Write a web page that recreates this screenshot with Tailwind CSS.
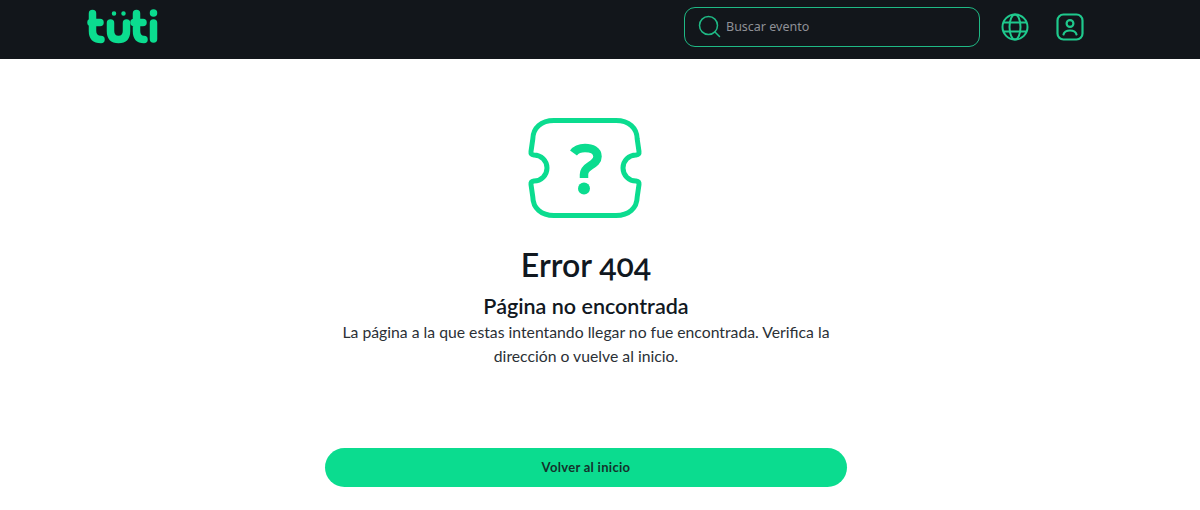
<!DOCTYPE html>
<html lang="es">

<head>
    <meta charset="UTF-8">
    <meta name="viewport" content="width=device-width, initial-scale=1.0">
    <title>Error 404</title>
    <script src="https://cdn.jsdelivr.net/npm/@tailwindcss/browser@4"></script>
</head>

<body class="bg-white font-['Lato',sans-serif] h-[510px] overflow-hidden">
<nav class="bg-[#12161b] h-[59px] flex items-center pl-[87px] pr-[116px]">
    <!-- logo -->
    <svg class="w-[71px] h-[44px] mb-[8px]" viewBox="0 0 71 44" fill="none" stroke="#0bdc8f" stroke-width="7.500" stroke-linecap="round" stroke-linejoin="round">
        <path d="M5.500 9.500V27Q5.500 35.500 14 35.500M4 18.500H13"/>
        <path d="M23.500 19V27Q23.500 35.500 31.500 35.500Q39.500 35.500 39.500 27V19"/>
        <path d="M49.500 9.500V27Q49.500 35.500 57 35.500M47 18.500H56"/>
        <path d="M66.500 19V35"/>
        <circle cx="27" cy="9.500" r="1.500" fill="#0bdc8f" stroke-width="1.500"/>
        <circle cx="36.500" cy="9.500" r="1.500" fill="#0bdc8f" stroke-width="1.500"/>
        <circle cx="66.500" cy="9" r="3" fill="#0bdc8f" stroke-width="1.500"/>
    </svg>

    <div class="ml-auto flex items-center mb-[6px]">
        <div class="w-[296px] h-[40px] border border-[#1fb985] rounded-[11px] flex items-center pl-[13px] gap-[5px]">
            <svg class="w-[23px] h-[23px]" viewBox="0 0 23 23" fill="none" stroke="#1fb985" stroke-width="1.500" stroke-linecap="round">
                <circle cx="10.500" cy="10.500" r="9"/>
                <path d="M17 17L21.500 21.500"/>
            </svg>
            <span class="pt-[1px] font-['Noto_Sans',sans-serif] text-[12.500px] text-[#8f9197]">Buscar evento</span>
        </div>

        <svg class="w-[28px] h-[28px] ml-[21px]" viewBox="0 0 28 28" fill="none" stroke="#1fc98d" stroke-width="2">
            <circle cx="14" cy="14" r="12.500"/>
            <ellipse cx="14" cy="14" rx="5.500" ry="12.500"/>
            <path d="M2.500 9.500H25.500M2.500 18.500H25.500"/>
        </svg>

        <svg class="w-[28px] h-[28px] ml-[27px]" viewBox="0 0 28 28" fill="none" stroke="#1fc98d" stroke-width="2.200" stroke-linecap="round">
            <rect x="1.500" y="1.500" width="25" height="25" rx="6"/>
            <circle cx="14" cy="10.500" r="3.400"/>
            <path d="M7.500 21.500Q8.500 17.500 14 17.500Q19.500 17.500 20.500 21.500"/>
        </svg>
    </div>
</nav>

<main class="w-[1172px] flex flex-col items-center">
    <svg class="w-[116px] h-[100px] mt-[59px] mr-[2px]" viewBox="0 0 116 100" fill="none">
        <path d="M27 2.500H89C102 2.500 110 10 110.200 21L112 33.500C112.300 35.800 111.500 36.600 109 37A13 13 0 0 0 109 63C111.500 63.400 112.300 64.200 112 66.500L110.200 79C110 90 102 97.500 89 97.500H27C14 97.500 6 90 5.800 79L4 66.500C3.700 64.200 4.500 63.400 7 63A13 13 0 0 0 7 37C4.500 36.600 3.700 35.800 4 33.500L5.800 21C6 10 14 2.500 27 2.500Z" stroke="#0bdc8f" stroke-width="5" stroke-linejoin="round"/>
        <path d="M46.500 35C49 31.500 53 30 58 30C65 30 70.500 33 70.500 38.500C70.500 43 67.500 45 63.500 47.500C59.500 50 57 52.500 57 56.500V60" stroke="#0bdc8f" stroke-width="8.500"/>
        <circle cx="57" cy="70.500" r="6" fill="#0bdc8f"/>
    </svg>

    <h1 class="mt-[25px] text-[32px] leading-[44px] font-semibold text-[#11181f] oldstyle-nums">Error 404</h1>
    <h2 class="mt-[5px] text-[21.500px] leading-[28px] font-semibold text-[#11181f]">Página no encontrada</h2>
    <p class="w-[500px] text-center text-[15.750px] leading-[24px] text-[#2b3036]">La página a la que estas intentando llegar no fue encontrada. Verifica la dirección o vuelve al inicio.</p>

    <button class="mt-[80px] w-[522px] h-[39px] rounded-full bg-[#0bdc8f] text-[13px] tracking-[0.3px] font-bold text-[#14322b]">Volver al inicio</button>
</main>
</body>

</html>
